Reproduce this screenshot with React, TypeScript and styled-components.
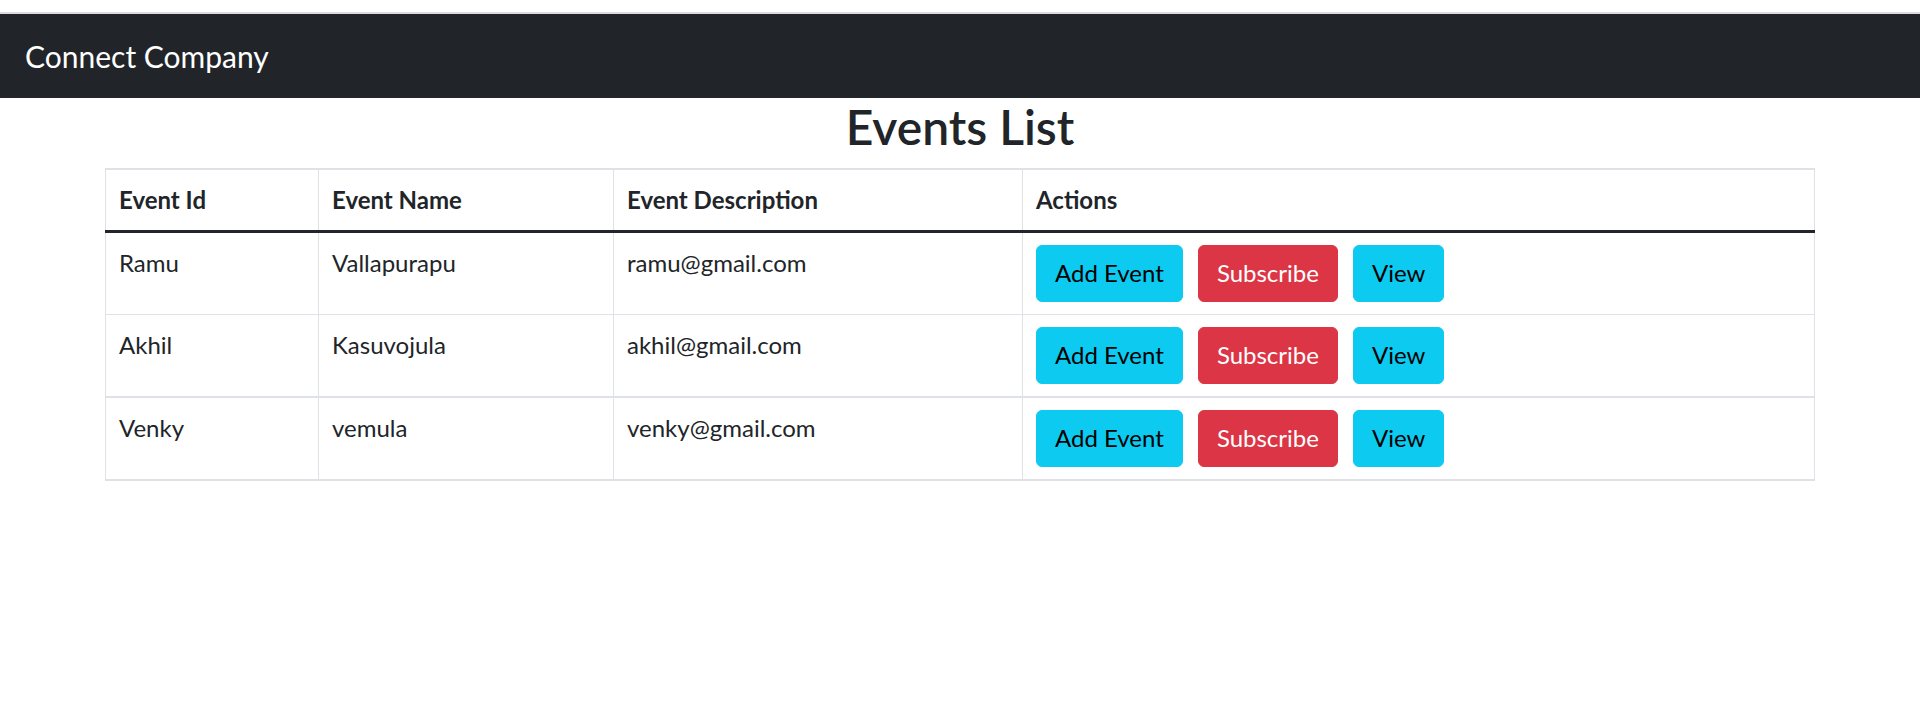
import React from "react";
import styled, { createGlobalStyle } from "styled-components";

const GlobalStyle = createGlobalStyle`
  html, body {
    margin: 0;
    padding: 0;
    background: #ffffff;
  }
  body {
    font-family: Lato, "Open Sans", "Liberation Sans", sans-serif;
    color: #212529;
  }
  * { box-sizing: border-box; }
`;

const TopStrip = styled.div`
  height: 14px;
  border-bottom: 2px solid #dcdcdc;
  background: #ffffff;
  box-sizing: border-box;
`;

const Navbar = styled.nav`
  height: 84px;
  background: #212529;
  display: flex;
  align-items: center;
  padding: 0 24px;
`;

const Brand = styled.a`
  color: #ffffff;
  font-size: 30px;
  line-height: 45px;
  text-decoration: none;
  padding-left: 1px;
`;

const Container = styled.main`
  width: 1710px;
  margin: 0 auto;
`;

const Title = styled.h2`
  margin: 0 0 12px;
  font-size: 48px;
  font-weight: 600;
  line-height: 57.6px;
  text-align: center;
  color: #212529;
`;

const Table = styled.table`
  width: 100%;
  border-collapse: collapse;
  table-layout: fixed;
  border-top: 2px solid #dee2e6;
  border-bottom: 2px solid #dee2e6;
`;

const HeadCell = styled.th<{ $w?: number }>`
  width: ${(p) => (p.$w ? `${p.$w}px` : "auto")};
  text-align: left;
  font-size: 24px;
  font-weight: 700;
  line-height: 36px;
  padding: 12px 13px;
  border-left: 1px solid #dee2e6;
  border-right: 1px solid #dee2e6;
  border-bottom: 3px solid #212529;
  vertical-align: bottom;
`;

const Row = styled.tr`
  border-bottom: 1px solid #dee2e6;
  &:nth-child(2) {
    border-bottom-width: 2px;
  }
`;

const Cell = styled.td`
  font-size: 24px;
  line-height: 36px;
  padding: 12px 13px;
  border-left: 1px solid #dee2e6;
  border-right: 1px solid #dee2e6;
  vertical-align: top;
  color: #212529;
`;

const Actions = styled.div`
  display: flex;
  gap: 15px;
`;

const Button = styled.button<{ $variant: "info" | "danger" }>`
  font-family: inherit;
  font-size: 24px;
  line-height: 36px;
  padding: 9.5px 18px;
  border-radius: 6px;
  border: 1px solid ${(p) => (p.$variant === "info" ? "#0dcaf0" : "#dc3545")};
  background: ${(p) => (p.$variant === "info" ? "#0dcaf0" : "#dc3545")};
  color: ${(p) => (p.$variant === "info" ? "#000000" : "#ffffff")};
  cursor: pointer;
`;

const events = [
  { id: "Ramu", name: "Vallapurapu", desc: "ramu@gmail.com" },
  { id: "Akhil", name: "Kasuvojula", desc: "akhil@gmail.com" },
  { id: "Venky", name: "vemula", desc: "venky@gmail.com" },
];

export default function App() {
  return (
    <>
      <GlobalStyle />
      <TopStrip />
      <Navbar>
        <Brand href="#">Connect Company</Brand>
      </Navbar>
      <Container>
        <Title>Events List</Title>
        <Table>
          <thead>
            <tr>
              <HeadCell $w={213}>Event Id</HeadCell>
              <HeadCell $w={295}>Event Name</HeadCell>
              <HeadCell $w={409}>Event Description</HeadCell>
              <HeadCell>Actions</HeadCell>
            </tr>
          </thead>
          <tbody>
            {events.map((e) => (
              <Row key={e.id}>
                <Cell>{e.id}</Cell>
                <Cell>{e.name}</Cell>
                <Cell>{e.desc}</Cell>
                <Cell>
                  <Actions>
                    <Button $variant="info">Add Event</Button>
                    <Button $variant="danger">Subscribe</Button>
                    <Button $variant="info">View</Button>
                  </Actions>
                </Cell>
              </Row>
            ))}
          </tbody>
        </Table>
      </Container>
    </>
  );
}
